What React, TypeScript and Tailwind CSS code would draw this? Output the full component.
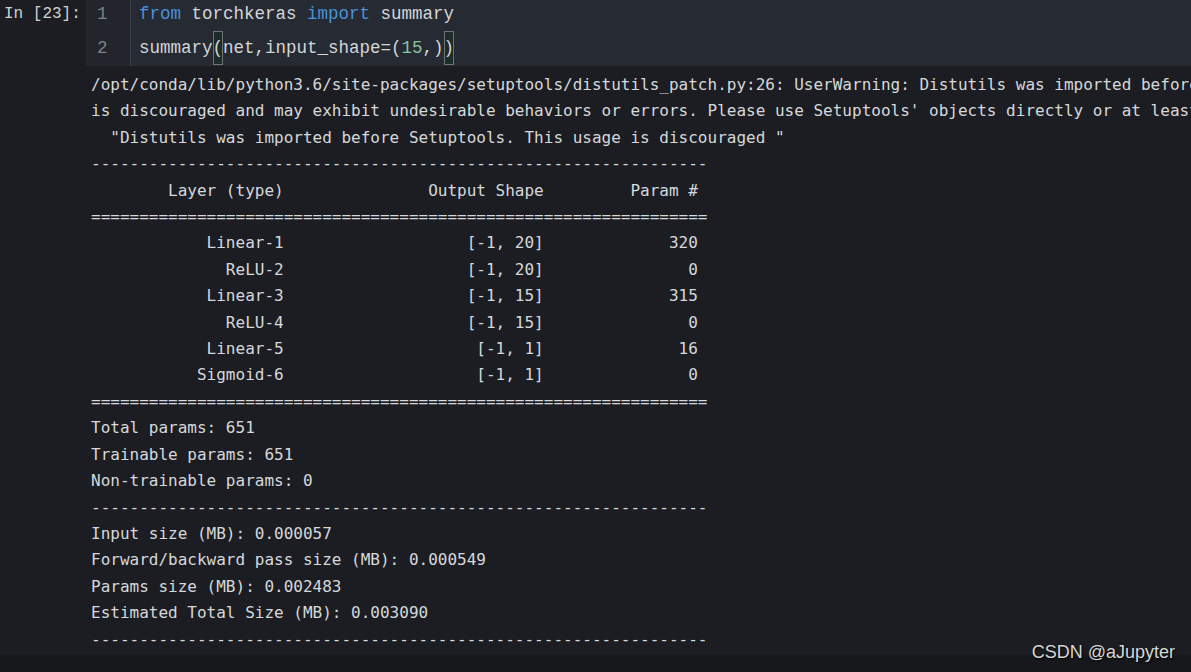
const mono = "font-['DejaVu_Sans_Mono','Liberation_Mono',monospace]";
const code = "font-['Liberation_Mono','Courier_New',monospace]";

const rule = (c: string) => c.repeat(64);
const row = (a: string, b: string, c: string) =>
  a.padStart(20) + "  " + b.padStart(25) + " " + c.padStart(15);

const outputLines = [
  "/opt/conda/lib/python3.6/site-packages/setuptools/distutils_patch.py:26: UserWarning: Distutils was imported before Setuptools. This usage",
  "is discouraged and may exhibit undesirable behaviors or errors. Please use Setuptools' objects directly or at least import Setuptools first.",
  '  "Distutils was imported before Setuptools. This usage is discouraged "',
  rule("-"),
  row("Layer (type)", "Output Shape", "Param #"),
  rule("="),
  row("Linear-1", "[-1, 20]", "320"),
  row("ReLU-2", "[-1, 20]", "0"),
  row("Linear-3", "[-1, 15]", "315"),
  row("ReLU-4", "[-1, 15]", "0"),
  row("Linear-5", "[-1, 1]", "16"),
  row("Sigmoid-6", "[-1, 1]", "0"),
  rule("="),
  "Total params: 651",
  "Trainable params: 651",
  "Non-trainable params: 0",
  rule("-"),
  "Input size (MB): 0.000057",
  "Forward/backward pass size (MB): 0.000549",
  "Params size (MB): 0.002483",
  "Estimated Total Size (MB): 0.003090",
  rule("-"),
];

function Bracket({ ch }: { ch: string }) {
  return (
    <span className="inline-block h-[34px] w-[10.5px] bg-[#1e2c29] outline outline-1 -outline-offset-1 outline-[#6e7472] text-[#d4d6d9]">
      {ch}
    </span>
  );
}

export default function App() {
  return (
    <div className="relative flex h-[672px] w-[1191px] flex-col overflow-hidden bg-[#1b1d22]">
      {/* input cell */}
      <div className="flex h-[66px] shrink-0">
        <div className={`w-[86px] pl-[4px] text-[16px] leading-[34px] text-[#d2d2d2] ${code}`}>
          <div className="-mt-[3px]">In [23]:</div>
        </div>
        <div className="flex flex-1 bg-[#262a32]">
          <div className={`w-[45px] border-r border-[#3a3f48] bg-[#22252b] pl-[11px] text-[17.5px] leading-[34px] text-[#7d828a] ${code}`}>
            <div className="-mt-[3px]">
              <div>1</div>
              <div>2</div>
            </div>
          </div>
          <div className={`pl-[8px] text-[17.5px] leading-[34px] whitespace-pre text-[#d4d6d9] ${code}`}>
            <div className="-mt-[3px]">
              <div>
                <span className="text-[#4a92dc]">from</span> torchkeras{" "}
                <span className="text-[#4a92dc]">import</span> summary
              </div>
              <div className="flex">
                <span>summary</span>
                <Bracket ch="(" />
                <span>net,input_shape=(</span>
                <span className="text-[#8fc2a2]">15</span>
                <span>,)</span>
                <Bracket ch=")" />
              </div>
            </div>
          </div>
        </div>
      </div>

      {/* output, clipped at the right like the notebook's scroll area */}
      <div className={`h-[589px] shrink-0 overflow-hidden pl-[91px] pt-[6px] text-[16px] leading-[26.4px] whitespace-pre text-[#d6d8db] ${mono}`}>
        {outputLines.map((l, i) => (
          <div key={i}>{l}</div>
        ))}
      </div>
      <div className="flex-1 bg-[#16181b]" />

      <div className="absolute right-[16px] bottom-[9px] font-['Liberation_Sans',Arial,sans-serif] text-[18px] leading-[22px] text-[#d6d6d6] [text-shadow:1px_1px_2px_#000]">
        CSDN @aJupyter
      </div>
    </div>
  );
}
